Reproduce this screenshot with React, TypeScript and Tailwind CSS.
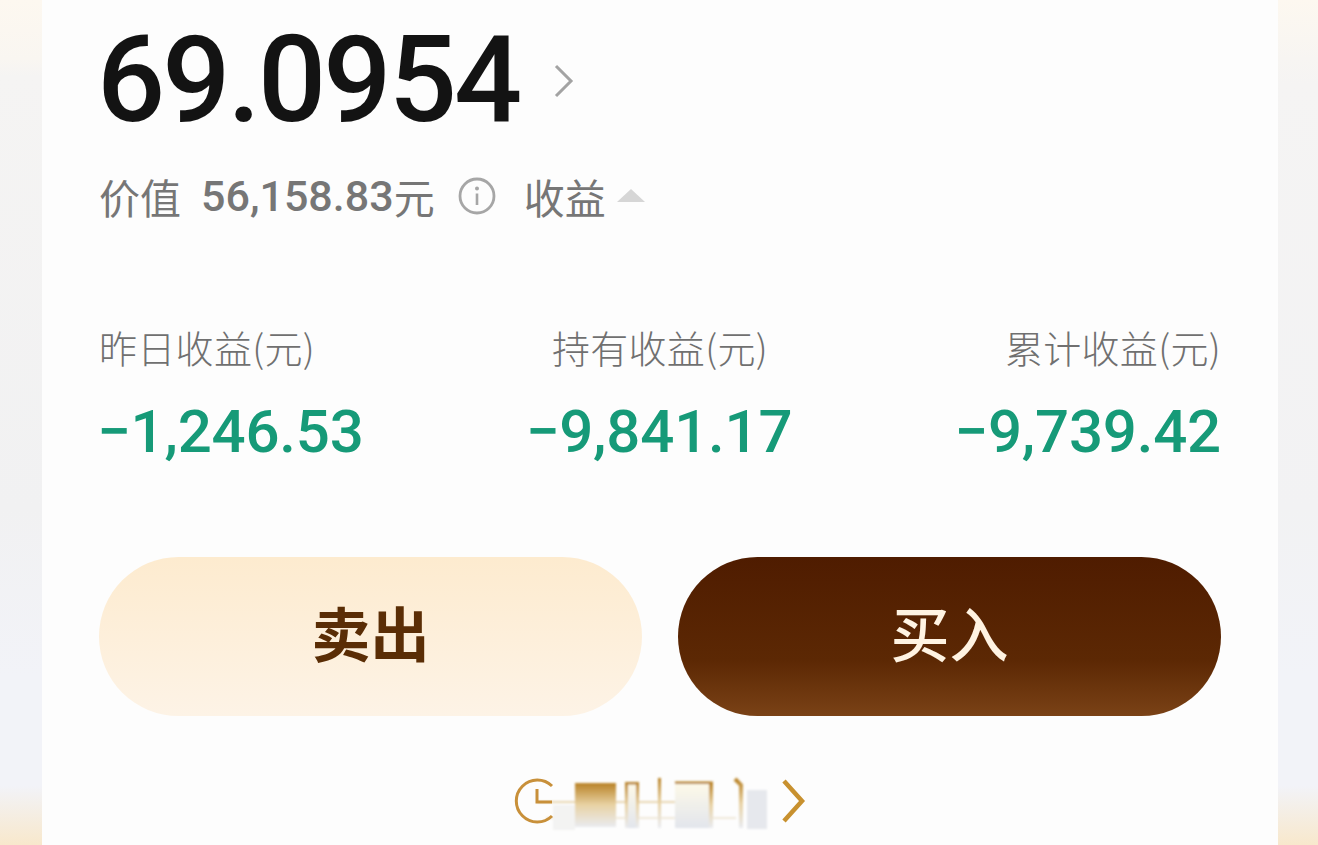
import React from 'react';

const cjk = "font-['Noto_Sans_CJK_SC','Noto_Sans',sans-serif]";
const num = "font-['Roboto','Noto_Sans_CJK_SC',sans-serif]";

function Stat({ label, value, align }: { label: string; value: string; align: string }) {
  return (
    <div className={`flex flex-col ${align}`}>
      <div className={`${cjk} h-[46px] text-[38px] leading-[46px] font-light tracking-[0.3px] text-[#707070] whitespace-nowrap`}>{label}</div>
      <div className={`${num} mt-[27px] -ml-[2px] h-[70px] text-[60px] leading-[70px] font-medium tracking-[-0.2px] text-[#169a78] whitespace-nowrap`}>{value}</div>
    </div>
  );
}

// Clock, smeared promo label and chevron under the buttons
function PromoLink() {
  return (
    <svg width="300" height="70" viewBox="0 0 300 70" fill="none">
      <defs>
        <linearGradient id="gold" x1="0" y1="0" x2="0" y2="1">
          <stop offset="0" stopColor="#b98226" />
          <stop offset="0.5" stopColor="#e8d2a4" />
          <stop offset="1" stopColor="#e9ebf0" />
        </linearGradient>
        <linearGradient id="pale" x1="0" y1="0" x2="0" y2="1">
          <stop offset="0" stopColor="#fefae8" />
          <stop offset="1" stopColor="#e2e5ec" />
        </linearGradient>
        <filter id="soft"><feGaussianBlur stdDeviation="1" /></filter>
      </defs>
      <g filter="url(#soft)">
        <rect x="27" y="26" width="165" height="2" fill="#e8d7b4" />
        <rect x="36" y="42" width="190" height="2" fill="#f0e9da" />
        <rect x="43" y="30" width="22" height="25" fill="#f3f3f2" />
        <rect x="65" y="8" width="41" height="44" fill="url(#gold)" />
        <rect x="115" y="7" width="14" height="46" fill="url(#pale)" />
        <rect x="115" y="7" width="14" height="2.5" fill="#b8842e" />
        <rect x="115" y="7" width="3" height="46" fill="url(#gold)" />
        <rect x="126" y="7" width="3" height="46" fill="url(#gold)" />
        <rect x="148" y="3" width="3" height="50" fill="url(#gold)" />
        <rect x="165" y="7" width="38" height="46" fill="url(#pale)" />
        <rect x="165" y="6.5" width="38" height="2.5" fill="#b8842e" />
        <rect x="199" y="7" width="4" height="46" fill="url(#gold)" />
        <path d="M225 4L231 10V53" stroke="url(#gold)" strokeWidth="4" />
        <rect x="237" y="15" width="20" height="39" fill="#e6e8ed" />
      </g>
      <path d="M42 11A21 21 0 1 0 42 41" stroke="#c8903a" strokeWidth="3" />
      <path d="M27 14V27H42" stroke="#c8903a" strokeWidth="3" />
      <path d="M274 6L292 26L274 46" stroke="#c8912f" strokeWidth="4.5" />
    </svg>
  );
}

export default function App() {
  return (
    <div className="flex h-[845px] w-[1318px] overflow-hidden bg-[#f4f4f4]">
      {/* Page background showing at the sides */}
      <div className="w-[42px] shrink-0 bg-[linear-gradient(180deg,#fdf8f0_0%,#f9f6f1_7%,#f5f4f3_9%,#f1f1f2_60%,#f2f3f8_80%,#f2f3f8_93%,#f8e8cc_100%)]" />

      <main className="flex h-full flex-1 flex-col bg-[#fdfdfd] px-[57px]">
        {/* Balance */}
        <div className="flex h-[160px] items-center">
          <span className={`${num} -ml-[2px] text-[120px] leading-[160px] font-medium text-[#131313] tracking-[-2.9px]`}>69.0954</span>
          <svg className="ml-[34px] mt-[2px]" width="22" height="36" viewBox="0 0 22 36" fill="none">
            <path d="M3 3L18 18L3 33" stroke="#a3a3a3" strokeWidth="3" />
          </svg>
        </div>

        {/* Value and earnings toggle */}
        <div className="mt-[9px] flex h-[54px] items-center text-[#767676]">
          <span className={`${cjk} text-[41px] leading-[54px]`}>价值</span>
          <span className={`${num} ml-[20px] text-[43px] leading-[54px] font-medium`}>56,158.83</span>
          <span className={`${cjk} text-[41px] leading-[54px]`}>元</span>
          <svg className="ml-[23px]" width="38" height="38" viewBox="0 0 38 38" fill="none">
            <circle cx="19" cy="19" r="17" stroke="#a6a6a6" strokeWidth="2.8" />
            <circle cx="19" cy="11.5" r="2" fill="#a6a6a6" />
            <path d="M19 16.5V28" stroke="#a6a6a6" strokeWidth="2.6" />
          </svg>
          <span className={`${cjk} ml-[28px] text-[41px] leading-[54px]`}>收益</span>
          <div className="ml-[11px] mb-[2px] h-0 w-0 border-x-[14px] border-b-[13px] border-x-transparent border-b-[#d6d6d6]" />
        </div>

        {/* Earnings summary */}
        <div className="mt-[101px] grid grid-cols-3">
          <Stat label="昨日收益(元)" value="−1,246.53" align="items-start" />
          <Stat label="持有收益(元)" value="−9,841.17" align="items-center" />
          <Stat label="累计收益(元)" value="−9,739.42" align="items-end" />
        </div>

        {/* Trade buttons */}
        <div className="mt-[90px] flex gap-[36px]">
          <button className={`${cjk} h-[159px] flex-1 rounded-full bg-gradient-to-b from-[#fdebcf] to-[#fdf3e6] pb-[8px] text-[59px] font-bold text-[#5a2d05]`}>卖出</button>
          <button className={`${cjk} h-[159px] flex-1 rounded-full bg-[linear-gradient(180deg,#4f1c00_0%,#5c2804_65%,#7a4216_100%)] pb-[8px] text-[59px] font-medium text-[#fff3e2]`}>买入</button>
        </div>

        <div className="mt-[59px] flex justify-center">
          <PromoLink />
        </div>
      </main>

      <div className="w-[40px] shrink-0 bg-[linear-gradient(180deg,#fdf8f0_0%,#f7f5f2_7%,#f5f4f3_10%,#f2f2f3_60%,#f2f3f8_80%,#f2f3f8_93%,#f8e8cc_100%)]" />
    </div>
  );
}
